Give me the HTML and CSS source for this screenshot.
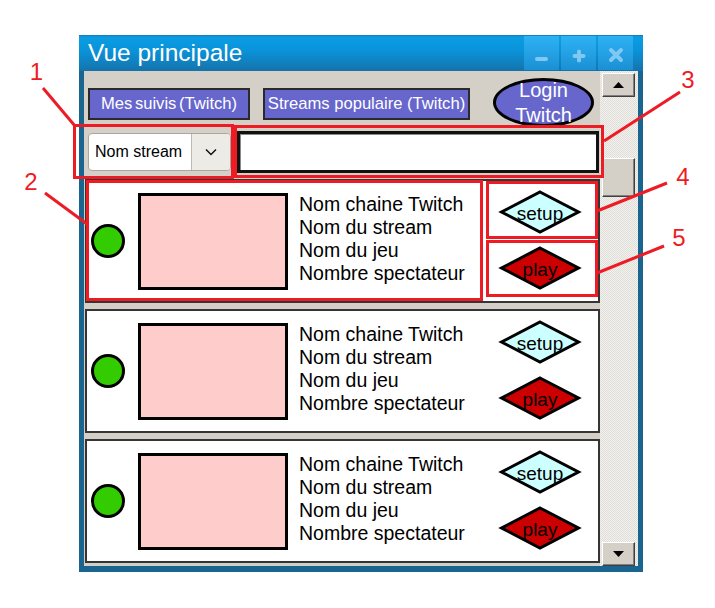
FILE: index.html
```html
<!DOCTYPE html>
<html lang="fr">
<head>
<meta charset="utf-8">
<title>Vue principale</title>
<link rel="stylesheet" href="styles.css">
</head>
<body>
<div class="window">
  <div class="titlebar">
    <span class="title">Vue principale</span>
    <div class="wbtns">
      <div class="wbtn"><svg width="35" height="34" viewBox="0 0 35 34"><rect x="11" y="21" width="13" height="4" rx="2" fill="#7ec8f2"/></svg></div>
      <div class="wbtn"><svg width="35" height="34" viewBox="0 0 35 34"><rect x="11.5" y="18" width="13" height="4" rx="2" fill="#7ec8f2"/><rect x="16" y="13.5" width="4" height="13" rx="2" fill="#7ec8f2"/></svg></div>
      <div class="wbtn"><svg width="35" height="34" viewBox="0 0 35 34"><path d="M13 14 L23 24 M23 14 L13 24" stroke="#7ec8f2" stroke-width="4" stroke-linecap="round"/></svg></div>
    </div>
  </div>
  <div class="client">
    <div class="main">
      <div class="toolbar">
        <div class="tbtn tbtn-follow">Mes suivis (Twitch)</div>
        <div class="tbtn tbtn-popular">Streams populaire (Twitch)</div>
        <div class="login"><span>Login</span><span>Twitch</span></div>
      </div>
      <div class="searchrow">
        <div class="combo">
          <span class="combo-val">Nom stream</span>
          <span class="combo-arrow"><svg width="12" height="8" viewBox="0 0 12 8"><polyline points="1,1.5 6,6.5 11,1.5" fill="none" stroke="#111" stroke-width="1.5"/></svg></span>
        </div>
        <div class="search"></div>
      </div>
      <div class="list">
        <div class="card">
          <div class="dot"></div>
          <div class="thumb"></div>
          <div class="info"><div>Nom chaine Twitch</div><div>Nom du stream</div><div>Nom du jeu</div><div>Nombre spectateur</div></div>
          <div class="actions">
            <svg class="diamond" width="84" height="44" viewBox="0 0 84 44"><polygon points="42,2 80.5,22 42,42 3.5,22" fill="#ccffff" stroke="#000" stroke-width="3"/><text x="42" y="30" text-anchor="middle">setup</text></svg>
            <svg class="diamond" width="84" height="44" viewBox="0 0 84 44"><polygon points="42,2 80.5,22 42,42 3.5,22" fill="#cc0000" stroke="#000" stroke-width="3"/><text x="42" y="30" text-anchor="middle">play</text></svg>
          </div>
        </div>
        <div class="card">
          <div class="dot"></div>
          <div class="thumb"></div>
          <div class="info"><div>Nom chaine Twitch</div><div>Nom du stream</div><div>Nom du jeu</div><div>Nombre spectateur</div></div>
          <div class="actions">
            <svg class="diamond" width="84" height="44" viewBox="0 0 84 44"><polygon points="42,2 80.5,22 42,42 3.5,22" fill="#ccffff" stroke="#000" stroke-width="3"/><text x="42" y="30" text-anchor="middle">setup</text></svg>
            <svg class="diamond" width="84" height="44" viewBox="0 0 84 44"><polygon points="42,2 80.5,22 42,42 3.5,22" fill="#cc0000" stroke="#000" stroke-width="3"/><text x="42" y="30" text-anchor="middle">play</text></svg>
          </div>
        </div>
        <div class="card">
          <div class="dot"></div>
          <div class="thumb"></div>
          <div class="info"><div>Nom chaine Twitch</div><div>Nom du stream</div><div>Nom du jeu</div><div>Nombre spectateur</div></div>
          <div class="actions">
            <svg class="diamond" width="84" height="44" viewBox="0 0 84 44"><polygon points="42,2 80.5,22 42,42 3.5,22" fill="#ccffff" stroke="#000" stroke-width="3"/><text x="42" y="30" text-anchor="middle">setup</text></svg>
            <svg class="diamond" width="84" height="44" viewBox="0 0 84 44"><polygon points="42,2 80.5,22 42,42 3.5,22" fill="#cc0000" stroke="#000" stroke-width="3"/><text x="42" y="30" text-anchor="middle">play</text></svg>
          </div>
        </div>
      </div>
    </div>
    <div class="scrollbar">
      <div class="sbtn"><svg width="11" height="6" viewBox="0 0 11 6"><polygon points="0,6 5.5,0 11,6" fill="#000"/></svg></div>
      <div class="sthumb"></div>
      <div class="sbtn sbtn-down"><svg width="11" height="6" viewBox="0 0 11 6"><polygon points="0,0 5.5,6 11,0" fill="#000"/></svg></div>
    </div>
  </div>
</div>
<svg class="annot" width="715" height="608" viewBox="0 0 715 608">
  <g fill="none" stroke="#ed1c24" stroke-width="3">
    <rect x="74.5" y="125.5" width="158" height="52"/>
    <rect x="235.5" y="126.5" width="367" height="50"/>
    <rect x="87.5" y="181.5" width="394" height="118"/>
    <rect x="487.5" y="182.5" width="109" height="55"/>
    <rect x="487.5" y="241.5" width="109" height="54"/>
    <line x1="43" y1="88" x2="75" y2="126"/>
    <line x1="45" y1="193" x2="87" y2="224"/>
    <line x1="680" y1="92" x2="604" y2="141"/>
    <line x1="667" y1="183" x2="597" y2="211"/>
    <line x1="664" y1="246" x2="597" y2="273"/>
  </g>
  <g class="num" fill="#ed1c24" text-anchor="middle">
    <text x="36.5" y="80">1</text>
    <text x="31" y="190">2</text>
    <text x="688" y="88">3</text>
    <text x="683" y="185">4</text>
    <text x="679" y="246">5</text>
  </g>
</svg>
</body>
</html>
```

FILE: styles.css
```css
html, body {
  margin: 0;
  padding: 0;
}
body {
  width: 715px;
  height: 608px;
  background: #ffffff;
  position: relative;
  overflow: hidden;
  font-family: "Liberation Sans", Arial, sans-serif;
}
.window {
  margin: 35px 0 0 79px;
  width: 564px;
  height: 537px;
  background: #1a6590;
  display: flex;
  flex-direction: column;
}
.titlebar {
  height: 36px;
  display: flex;
  align-items: flex-start;
  background: linear-gradient(#1a78ae 0, #0a9de4 2px, #0a92d8 45%, #1573ab 100%);
}
.title {
  flex: 1;
  color: #ffffff;
  font-size: 24.5px;
  line-height: 36px;
  padding-left: 9px;
}
.wbtns {
  display: flex;
  gap: 2px;
  margin: 1px 10px 0 0;
}
.wbtn {
  width: 35px;
  height: 34px;
  background: linear-gradient(#2db2f4, #1b90d4);
  display: flex;
}
.client {
  flex: 1;
  margin: 0 5px 6px;
  background: #d4d0c8;
  display: flex;
  min-height: 0;
}
.main {
  width: 516px;
  display: flex;
  flex-direction: column;
  min-height: 0;
}
.toolbar {
  display: flex;
  align-items: flex-start;
  padding: 7px 0 0 4px;
}
.tbtn {
  box-sizing: border-box;
  height: 32px;
  margin-top: 10px;
  background: #6666cc;
  border: 2px solid #2a2a2a;
  color: #ffffff;
  font-size: 16.6px;
  line-height: 28px;
  text-align: center;
  white-space: nowrap;
}
.tbtn-follow {
  width: 162px;
  word-spacing: -2px;
}
.tbtn-popular {
  width: 207px;
  margin-left: 13px;
}
.login {
  box-sizing: border-box;
  width: 101px;
  height: 49px;
  margin-left: 23px;
  border: 3px solid #000;
  border-radius: 50%;
  background: #6666cc;
  color: #ffffff;
  font-size: 20px;
  line-height: 25px;
  display: flex;
  flex-direction: column;
  align-items: center;
  justify-content: center;
}
.searchrow {
  display: flex;
  align-items: flex-start;
  margin-top: 4px;
  height: 42px;
}
.combo {
  box-sizing: border-box;
  width: 143px;
  height: 38px;
  margin: 2px 0 0 4px;
  border: 1px solid #aba79f;
  border-radius: 4px;
  background: #ffffff;
  display: flex;
  overflow: hidden;
}
.combo-val {
  width: 102px;
  padding-left: 6px;
  box-sizing: border-box;
  font-size: 16px;
  line-height: 36px;
  color: #000;
}
.combo-arrow {
  flex: 1;
  background: #ecebe6;
  border-left: 1px solid #bdb9b1;
  display: flex;
  align-items: center;
  justify-content: center;
}
.search {
  box-sizing: border-box;
  width: 362px;
  height: 42px;
  margin-left: 6px;
  background: #ffffff;
  border: 3px solid #111;
  box-shadow: inset 1px 1px 0 #8a8a8a;
}
.list {
  flex: 1;
  min-height: 0;
  overflow: hidden;
  margin-top: 6px;
  padding-left: 1px;
  display: flex;
  flex-direction: column;
  gap: 6px;
}
.card {
  box-sizing: border-box;
  flex: none;
  height: 124px;
  background: #ffffff;
  border: 2px solid #353535;
  display: flex;
  align-items: center;
  padding: 0 16px 0 4px;
}
.dot {
  box-sizing: border-box;
  width: 34px;
  height: 34px;
  border-radius: 50%;
  background: #33cc00;
  border: 3px solid #000;
}
.thumb {
  box-sizing: border-box;
  width: 150px;
  height: 97px;
  margin-left: 13px;
  background: #ffcccc;
  border: 3px solid #000;
}
.info {
  margin: -4px 0 0 11px;
  font-size: 19.5px;
  line-height: 23px;
  color: #000;
  white-space: nowrap;
}
.actions {
  margin: -2px 0 0 auto;
  display: flex;
  flex-direction: column;
  gap: 12px;
}
.diamond {
  display: block;
}
.diamond text {
  font-family: "Liberation Sans", Arial, sans-serif;
  font-size: 19px;
  fill: #000;
}
.scrollbar {
  width: 38px;
  display: flex;
  flex-direction: column;
  padding: 2px 0 0 2px;
  box-sizing: border-box;
  background-color: #ebe9e5;
  background-image: repeating-conic-gradient(#e0ded9 0 25%, #f3f1ed 0 50%);
  background-size: 2px 2px;
}
.sbtn, .sthumb {
  box-sizing: border-box;
  width: 33px;
  background: #d4d0c8;
  border-top: 1px solid #ffffff;
  border-left: 1px solid #ffffff;
  border-right: 1px solid #404040;
  border-bottom: 1px solid #404040;
  box-shadow: inset -1px -1px 0 #808080;
}
.sbtn {
  height: 24px;
  display: flex;
  align-items: center;
  justify-content: center;
}
.sthumb {
  height: 39px;
  margin-top: 61px;
}
.sbtn-down {
  margin-top: auto;
}
.annot {
  position: absolute;
  left: 0;
  top: 0;
  pointer-events: none;
}
.annot .num text {
  font-family: "Liberation Sans", Arial, sans-serif;
  font-size: 24px;
}
```
